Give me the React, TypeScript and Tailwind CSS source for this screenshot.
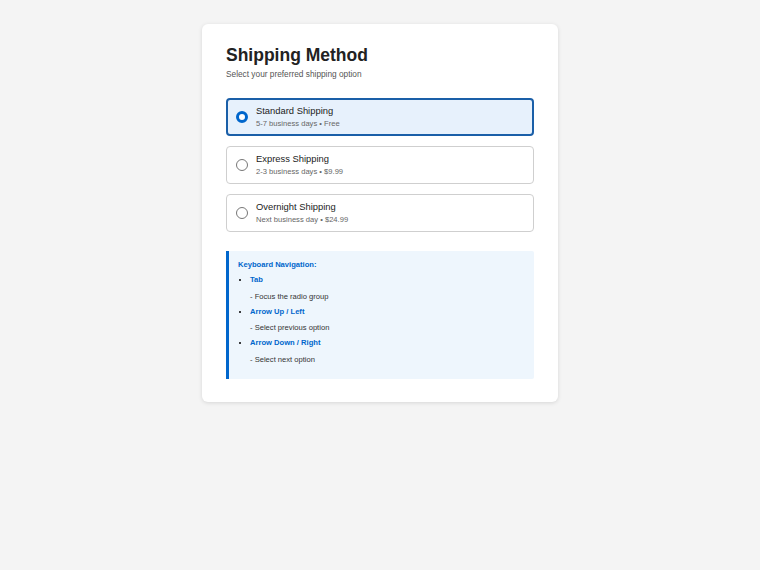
import React, { useState } from "react";

const options = [
  { id: "standard", title: "Standard Shipping", desc: "5-7 business days • Free" },
  { id: "express", title: "Express Shipping", desc: "2-3 business days • $9.99" },
  { id: "overnight", title: "Overnight Shipping", desc: "Next business day • $24.99" },
];

const keys: [string, string][] = [
  ["Tab", "- Focus the radio group"],
  ["Arrow Up / Left", "- Select previous option"],
  ["Arrow Down / Right", "- Select next option"],
];

export default function App() {
  const [sel, setSel] = useState("standard");
  return (
    <div className="min-h-screen bg-[#f4f4f4] pt-6 flex justify-center" style={{ fontFamily: '"Liberation Sans", Arial, sans-serif' }}>
      <div className="w-[356px] h-[378px] bg-white rounded-md shadow-[0_1px_4px_rgba(0,0,0,0.12)] px-6 pt-[21px]">
        <h1 className="text-[17.5px] leading-[20px] font-bold text-[#222]">Shipping Method</h1>
        <p className="mt-[4px] text-[8.3px] leading-[10px] text-[#555]">Select your preferred shipping option</p>
        <div className="mt-[19px] flex flex-col gap-[10px]" role="radiogroup">
          {options.map((o) => {
            const active = sel === o.id;
            return (
              <div
                key={o.id}
                role="radio"
                aria-checked={active}
                onClick={() => setSel(o.id)}
                className={
                  "h-[38px] rounded-[4px] flex items-center cursor-pointer " +
                  (active ? "border-2 border-[#1a5fa8] bg-[#e7f1fc] pl-[8px]" : "border border-[#cfcfcf] bg-white pl-[9px]")
                }
              >
                <span
                  className={
                    "w-[12px] h-[12px] rounded-full shrink-0 " +
                    (active ? "border-[3.5px] border-[#0066cc] bg-white" : "border-[1.5px] border-[#777] bg-white")
                  }
                ></span>
                <div className="ml-[8px]">
                  <div className="text-[9.4px] leading-[12px] text-[#222]">{o.title}</div>
                  <div className="text-[7.6px] leading-[10px] text-[#666] mt-[2px]">{o.desc}</div>
                </div>
              </div>
            );
          })}
        </div>
        <div className="mt-[19px] h-[128px] bg-[#eef6fd] border-l-[3px] border-[#0066cc] rounded-r-[2px] pl-[9px] pr-3 pt-[9px]">
          <div className="text-[7.6px] leading-[10px] font-bold text-[#0066cc]">Keyboard Navigation:</div>
          <ul className="list-disc pl-[12px] mt-[5px] text-[7.6px] flex flex-col gap-[5px]">
            {keys.map(([k, d]) => (
              <li key={k} className="leading-[10px]">
                <strong className="block text-[#0066cc]">{k}</strong>
                <span className="block text-[#333] mt-[6.5px]">{d}</span>
              </li>
            ))}
          </ul>
        </div>
      </div>
    </div>
  );
}
